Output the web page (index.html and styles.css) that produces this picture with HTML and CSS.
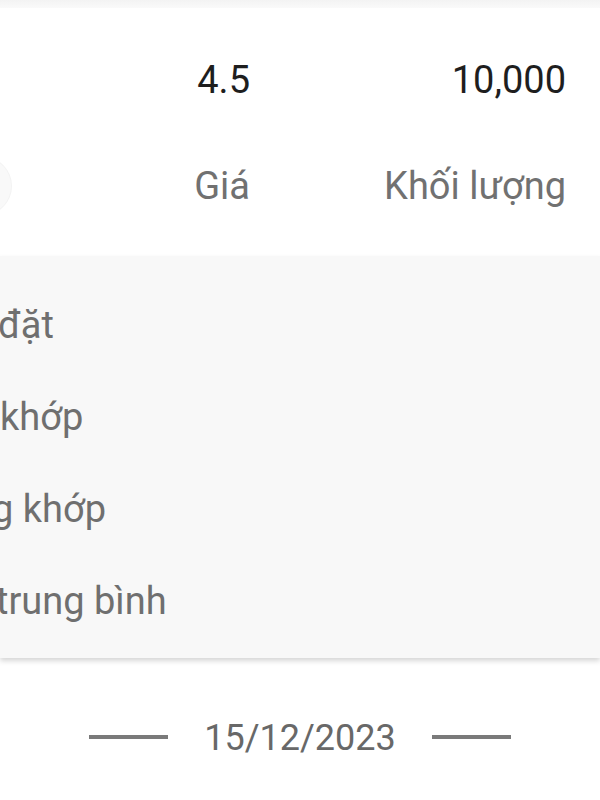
FILE: index.html
```html
<!DOCTYPE html>
<html lang="vi">
<head>
<meta charset="utf-8">
<link rel="stylesheet" href="styles.css">
</head>
<body>
<div class="topbar"></div>
<section class="stats">
  <div class="cell"></div>
  <div class="cell value">4.5</div>
  <div class="cell value">10,000</div>
  <div class="cell pill-cell"><div class="pill"></div></div>
  <div class="cell label">Giá</div>
  <div class="cell label">Khối lượng</div>
</section>
<section class="panel">
  <div class="item cut-a">đặt</div>
  <div class="item cut-b">khớp</div>
  <div class="item cut-c">g khớp</div>
  <div class="item cut-d">trung bình</div>
</section>
<div class="date-row">
  <span class="rule"></span>
  <span class="date">15/12/2023</span>
  <span class="rule"></span>
</div>
</body>
</html>
```
FILE: styles.css
```css
html, body {
  margin: 0;
  padding: 0;
  background: #ffffff;
  overflow: hidden;
  width: 600px;
  height: 800px;
  font-family: Roboto, "Noto Sans", sans-serif;
}
.topbar {
  height: 8px;
  background: linear-gradient(#f3f3f3, #fafafa);
}
.stats {
  display: grid;
  grid-template-columns: 12px 238px 316px;
  grid-template-rows: 44px 44px;
  row-gap: 62px;
  padding-top: 50px;
}
.cell {
  font-size: 38px;
  line-height: 44px;
  text-align: right;
  white-space: nowrap;
}
.value { color: #1e1e1e; }
.label { color: #717171; }
.pill-cell {
  position: relative;
}
.pill {
  position: absolute;
  right: 0;
  top: -8px;
  width: 110px;
  height: 60px;
  border-radius: 30px;
  background: #f9f9f9;
  border: 1px solid #f3f3f3;
  box-sizing: border-box;
}
.panel {
  margin-top: 48px;
  height: 402px;
  box-sizing: border-box;
  padding-top: 23px;
  background: #f8f8f8;
  box-shadow: 0 3px 5px rgba(0, 0, 0, 0.16);
}
.item {
  font-size: 38px;
  line-height: 92px;
  height: 92px;
  color: #6f6f6f;
  white-space: nowrap;
}
.cut-a { margin-left: -2px; }
.cut-b { margin-left: 0; }
.cut-c { margin-left: -8px; }
.cut-d { margin-left: -4px; }
.date-row {
  margin-top: 49px;
  height: 60px;
  display: flex;
  align-items: center;
  justify-content: center;
  gap: 36px;
}
.rule {
  width: 79px;
  height: 4px;
  background: #7a7a7a;
}
.date {
  font-size: 36px;
  line-height: 44px;
  color: #686868;
  padding-top: 1px;
}
```
